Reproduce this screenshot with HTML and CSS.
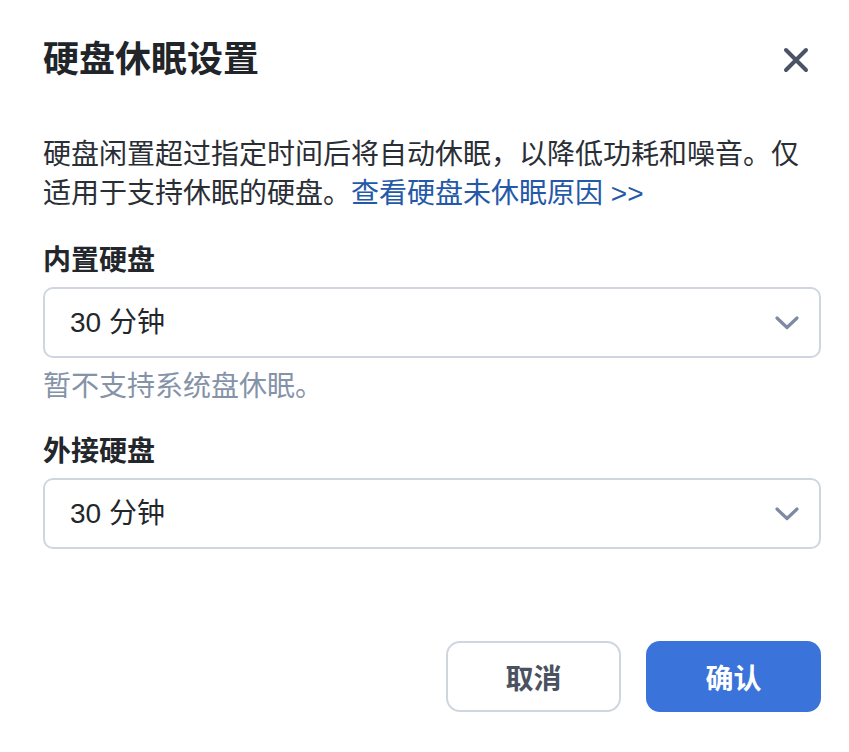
FILE: index.html
```html
<!DOCTYPE html>
<html lang="zh-CN">
<head>
<meta charset="utf-8">
<title>硬盘休眠设置</title>
<link rel="stylesheet" href="styles.css">
</head>
<body>
<div class="dialog">
  <div class="header">
    <h1 class="title">硬盘休眠设置</h1>
    <button class="close" aria-label="关闭">
      <svg width="26" height="26" viewBox="0 0 26 26"><path d="M3 3 L23 23 M23 3 L3 23" stroke="#4a5466" stroke-width="4" stroke-linecap="round" fill="none"/></svg>
    </button>
  </div>
  <p class="desc">硬盘闲置超过指定时间后将自动休眠，以降低功耗和噪音。仅适用于支持休眠的硬盘。<a class="link" href="#">查看硬盘未休眠原因 &gt;&gt;</a></p>

  <div class="field">
    <div class="label">内置硬盘</div>
    <div class="select">
      <span class="value">30 分钟</span>
      <svg class="chev" width="24" height="14" viewBox="0 0 24 14"><path d="M2 2 L12 11.5 L22 2" stroke="#7d8aa0" stroke-width="3.2" stroke-linecap="round" stroke-linejoin="round" fill="none"/></svg>
    </div>
    <div class="help">暂不支持系统盘休眠。</div>
  </div>

  <div class="field">
    <div class="label">外接硬盘</div>
    <div class="select">
      <span class="value">30 分钟</span>
      <svg class="chev" width="24" height="14" viewBox="0 0 24 14"><path d="M2 2 L12 11.5 L22 2" stroke="#7d8aa0" stroke-width="3.2" stroke-linecap="round" stroke-linejoin="round" fill="none"/></svg>
    </div>
  </div>

  <div class="footer">
    <button class="btn btn-cancel">取消</button>
    <button class="btn btn-ok">确认</button>
  </div>
</div>
</body>
</html>
```

FILE: styles.css
```css
* { box-sizing: border-box; }
html, body { margin: 0; padding: 0; background: #ffffff; }
body {
  font-family: "Liberation Sans", "Noto Sans CJK SC", sans-serif;
  color: #2a2e35;
}
.dialog {
  width: 849px;
  height: 752px;
  padding: 38px 28px 0 43px;
  display: flex;
  flex-direction: column;
}
.header {
  display: flex;
  align-items: center;
  justify-content: space-between;
  height: 44px;
}
.title {
  margin: 0;
  font-size: 36px;
  line-height: 44px;
  font-weight: 700;
  color: #212429;
}
.close {
  border: 0;
  background: none;
  padding: 0;
  margin-right: 10px;
  width: 30px;
  height: 30px;
  display: flex;
  align-items: center;
  justify-content: center;
  cursor: pointer;
}
.desc {
  margin: 53px 0 0 0;
  font-size: 28px;
  line-height: 39px;
  color: #2a2e35;
}
.link {
  color: #2458a8;
  text-decoration: none;
}
.field {
  display: flex;
  flex-direction: column;
}
.field + .field { margin-top: 25px; }
.desc + .field { margin-top: 28px; }
.label {
  font-size: 28px;
  line-height: 40px;
  font-weight: 700;
  color: #23262b;
}
.select {
  margin-top: 6px;
  height: 71px;
  border: 2px solid #cfd6e0;
  border-radius: 10px;
  display: flex;
  align-items: center;
  justify-content: space-between;
  padding: 0 20px 0 25px;
}
.value {
  font-size: 28px;
  line-height: 40px;
  color: #23262b;
}
.chev { display: block; }
.help {
  margin-top: 9px;
  font-size: 28px;
  line-height: 40px;
  color: #8593a8;
}
.footer {
  margin-top: 92px;
  display: flex;
  justify-content: flex-end;
  gap: 25px;
}
.btn {
  width: 175px;
  height: 71px;
  border-radius: 14px;
  font-family: "Liberation Sans", "Noto Sans CJK SC", sans-serif;
  font-size: 28px;
  font-weight: 700;
  cursor: pointer;
}
.btn-cancel {
  background: #ffffff;
  border: 2px solid #cfd6e0;
  color: #4a5262;
}
.btn-ok {
  background: #3a73d9;
  border: 0;
  color: #ffffff;
}
```
